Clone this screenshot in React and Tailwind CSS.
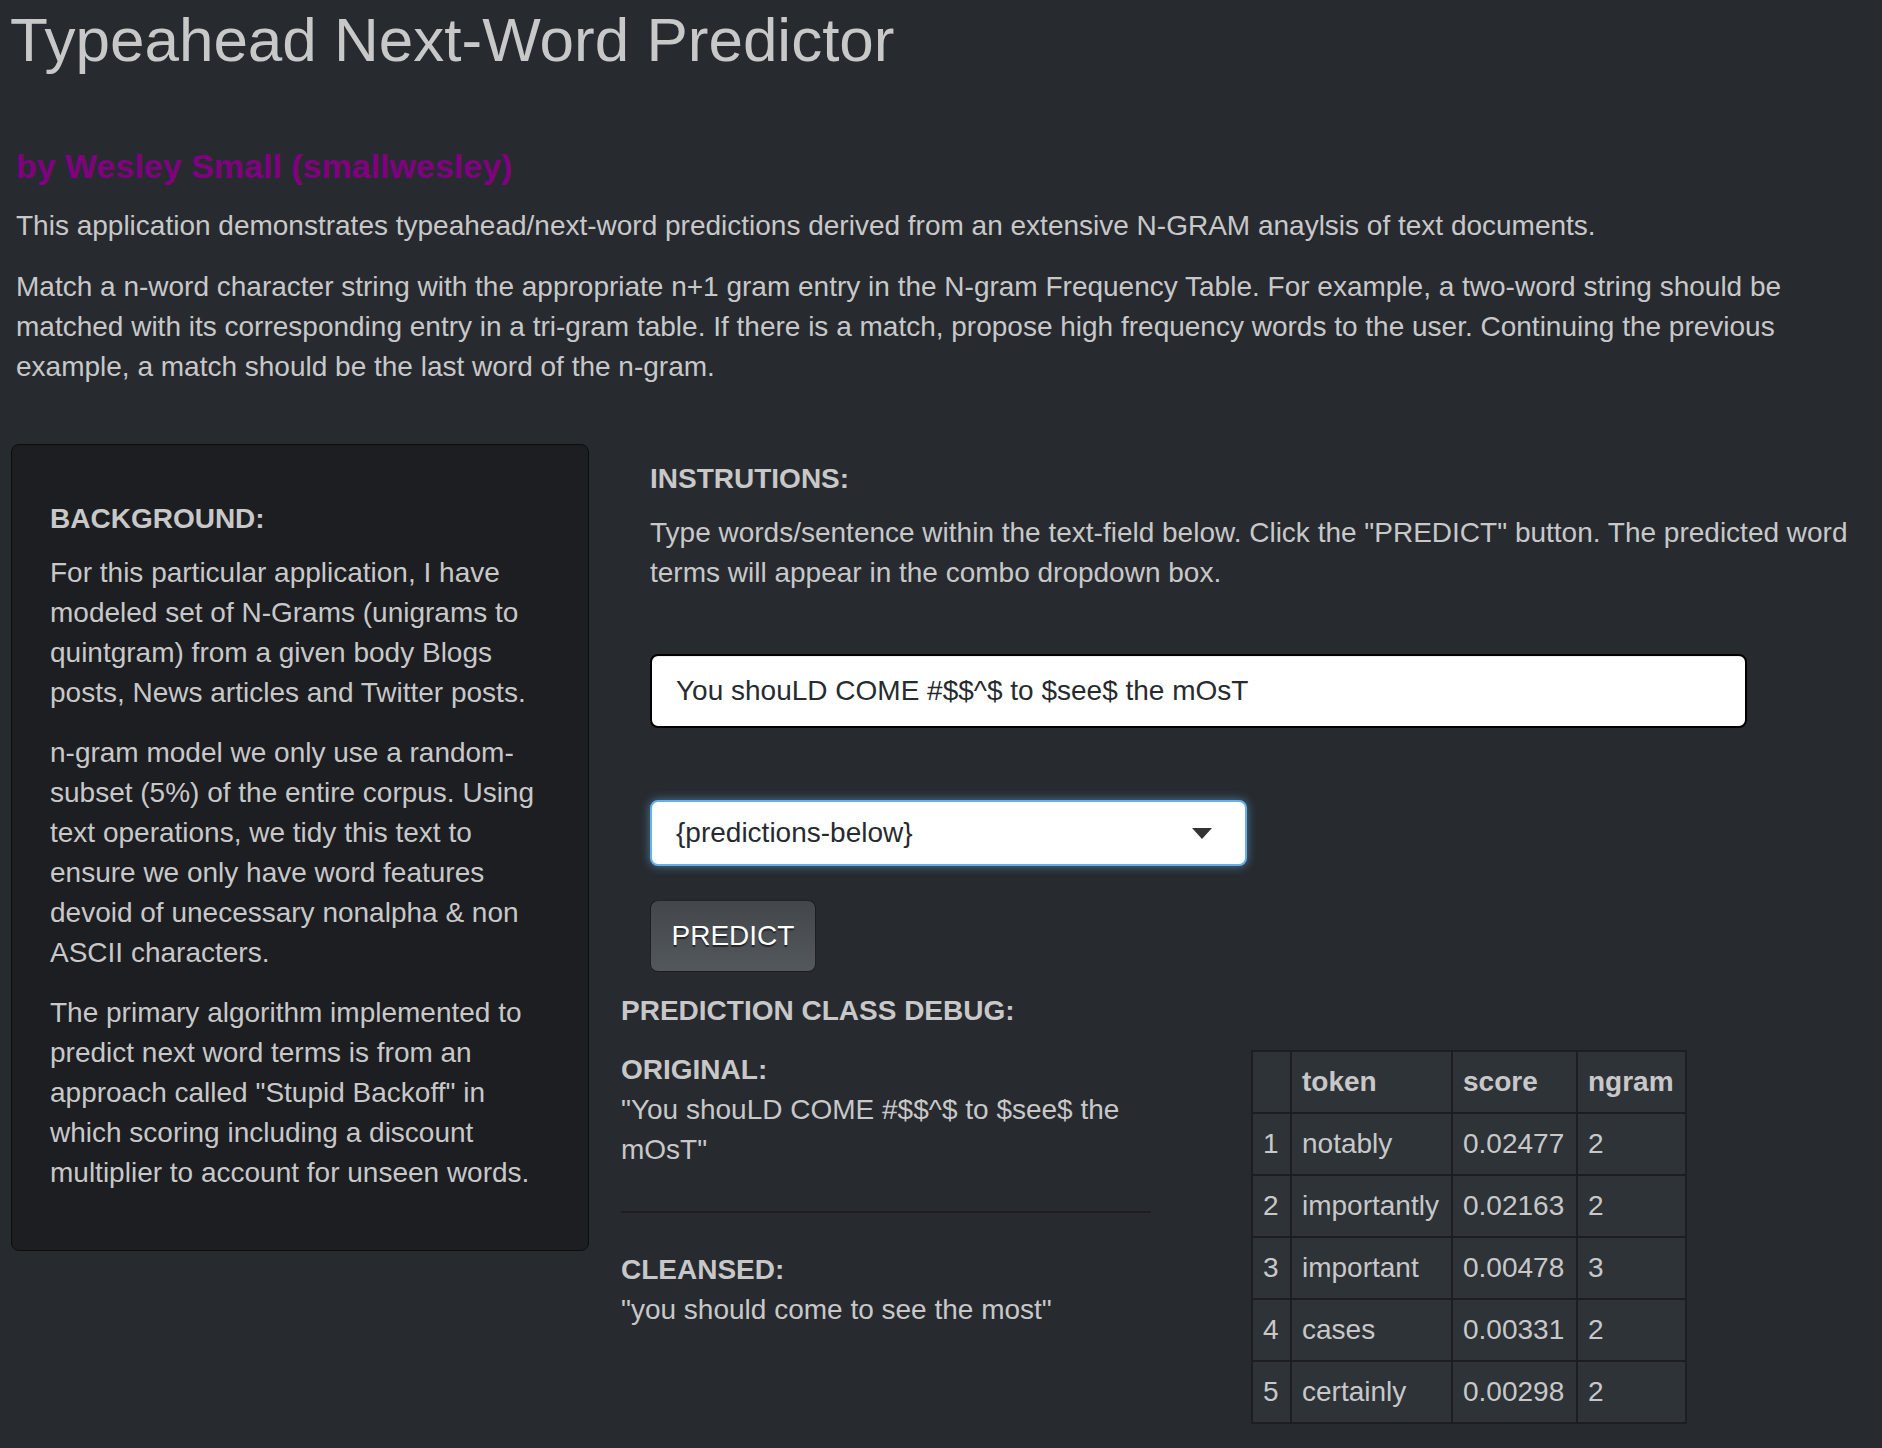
import React from 'react';

const predictions = [
  { token: 'notably', score: '0.02477', ngram: '2' },
  { token: 'importantly', score: '0.02163', ngram: '2' },
  { token: 'important', score: '0.00478', ngram: '3' },
  { token: 'cases', score: '0.00331', ngram: '2' },
  { token: 'certainly', score: '0.00298', ngram: '2' },
];

function Sidebar() {
  return (
    <div className="w-[578px] shrink-0 rounded-[8px] border border-[#0c0d0e] bg-[#1c1e22] pl-[38px] pr-[38px] pt-[54px] pb-[57px] shadow-[inset_0_1px_1px_rgba(0,0,0,0.05)]">
      <p className="font-bold leading-[40px]">BACKGROUND:</p>
      <p className="mt-[14px] leading-[40px]">
        For this particular application, I have modeled set of N-Grams (unigrams to quintgram) from a given body Blogs posts, News articles and Twitter posts.
      </p>
      <p className="mt-[20px] leading-[40px]">
        n-gram model we only use a random-subset (5%) of the entire corpus. Using text operations, we tidy this text to ensure we only have word features devoid of unecessary nonalpha &amp; non ASCII characters.
      </p>
      <p className="mt-[20px] leading-[40px]">
        The primary algorithm implemented to predict next word terms is from an approach called "Stupid Backoff" in which scoring including a discount multiplier to account for unseen words.
      </p>
    </div>
  );
}

function PredictionTable() {
  return (
    <table className="border-collapse border-2 border-[#1c1e22] bg-[#2e3338] text-left">
      <thead>
        <tr className="h-[62px]">
          <th className="w-[39px] border-2 border-[#1c1e22] px-[10px]"></th>
          <th className="w-[161px] border-2 border-[#1c1e22] px-[10px] font-bold">token</th>
          <th className="w-[125px] border-2 border-[#1c1e22] px-[10px] font-bold">score</th>
          <th className="w-[109px] border-2 border-[#1c1e22] px-[10px] font-bold">ngram</th>
        </tr>
      </thead>
      <tbody>
        {predictions.map((row, i) => (
          <tr key={row.token} className="h-[62px]">
            <td className="border-2 border-[#1c1e22] px-[10px]">{i + 1}</td>
            <td className="border-2 border-[#1c1e22] px-[10px]">{row.token}</td>
            <td className="border-2 border-[#1c1e22] px-[10px]">{row.score}</td>
            <td className="border-2 border-[#1c1e22] px-[10px]">{row.ngram}</td>
          </tr>
        ))}
      </tbody>
    </table>
  );
}

function MainPanel() {
  return (
    <div className="ml-[32px] flex-1 pr-[15px]">
      <div className="pl-[29px]">
        <p className="mt-[15px] font-bold leading-[40px]">INSTRUTIONS:</p>
        <p className="mt-[14px] leading-[40px]">
          Type words/sentence within the text-field below. Click the "PREDICT" button. The predicted word terms will appear in the combo dropdown box.
        </p>

        {/* Text input */}
        <input
          type="text"
          readOnly
          value="You shouLD COME #$$^$ to $see$ the mOsT"
          className="mt-[61px] block h-[74px] w-[1097px] rounded-[8px] border-2 border-black bg-white pl-[24px] text-[28px] text-[#272b30] shadow-[inset_0_1px_1px_rgba(0,0,0,0.075)] outline-none"
        />

        {/* Predictions combo */}
        <div className="mt-[72px] flex h-[66px] w-[597px] items-center justify-between rounded-[8px] border-2 border-[#66afe9] bg-white pl-[24px] pr-[33px] text-[#272b30] shadow-[0_0_10px_rgba(102,175,233,0.6)]">
          <span className="leading-[40px]">{'{predictions-below}'}</span>
          <svg width="20" height="11" viewBox="0 0 20 11">
            <path d="M0 0 L20 0 L10 11 Z" fill="#333" />
          </svg>
        </div>

        <button className="mt-[34px] block h-[72px] w-[166px] rounded-[8px] border border-black/60 bg-gradient-to-b from-[#43474c] to-[#53585d] text-[28px] text-white [text-shadow:0_2px_1px_rgba(0,0,0,0.55)]">
          PREDICT
        </button>
      </div>

      <p className="mt-[19px] font-bold leading-[40px]">PREDICTION CLASS DEBUG:</p>

      <div className="mt-[19px] flex items-start">
        <div className="w-[530px] shrink-0">
          <p className="font-bold leading-[40px]">ORIGINAL:</p>
          <p className="leading-[40px]">"You shouLD COME #$$^$ to $see$ the mOsT"</p>
          <hr className="mt-[41px] border-0 border-t-2 border-[#1c1e22]" />
          <p className="mt-[37px] font-bold leading-[40px]">CLEANSED:</p>
          <p className="leading-[40px]">"you should come to see the most"</p>
        </div>
        <div className="ml-[100px]">
          <PredictionTable />
        </div>
      </div>
    </div>
  );
}

export default function App() {
  return (
    <div className="min-h-screen bg-[#272b30] pt-[6px] font-['Liberation_Sans',Arial,sans-serif] text-[28px] text-[#c8c8c8]">
      <h1 className="ml-[10px] text-[62px] leading-[68px]">Typeahead Next-Word Predictor</h1>
      <h4 className="mt-[72px] pl-[16px] text-[34px] font-bold leading-[40px] text-[#800080]">
        by Wesley Small (smallwesley)
      </h4>
      <p className="mt-[20px] pl-[16px] leading-[40px]">
        This application demonstrates typeahead/next-word predictions derived from an extensive N-GRAM anaylsis of text documents.
      </p>
      <p className="mt-[21px] pl-[16px] pr-[15px] leading-[40px]">
        Match a n-word character string with the appropriate n+1 gram entry in the N-gram Frequency Table. For example, a two-word string should be matched with its corresponding entry in a tri-gram table. If there is a match, propose high frequency words to the user. Continuing the previous example, a match should be the last word of the n-gram.
      </p>

      <div className="mt-[57px] flex items-start pl-[11px]">
        <Sidebar />
        <MainPanel />
      </div>
    </div>
  );
}
